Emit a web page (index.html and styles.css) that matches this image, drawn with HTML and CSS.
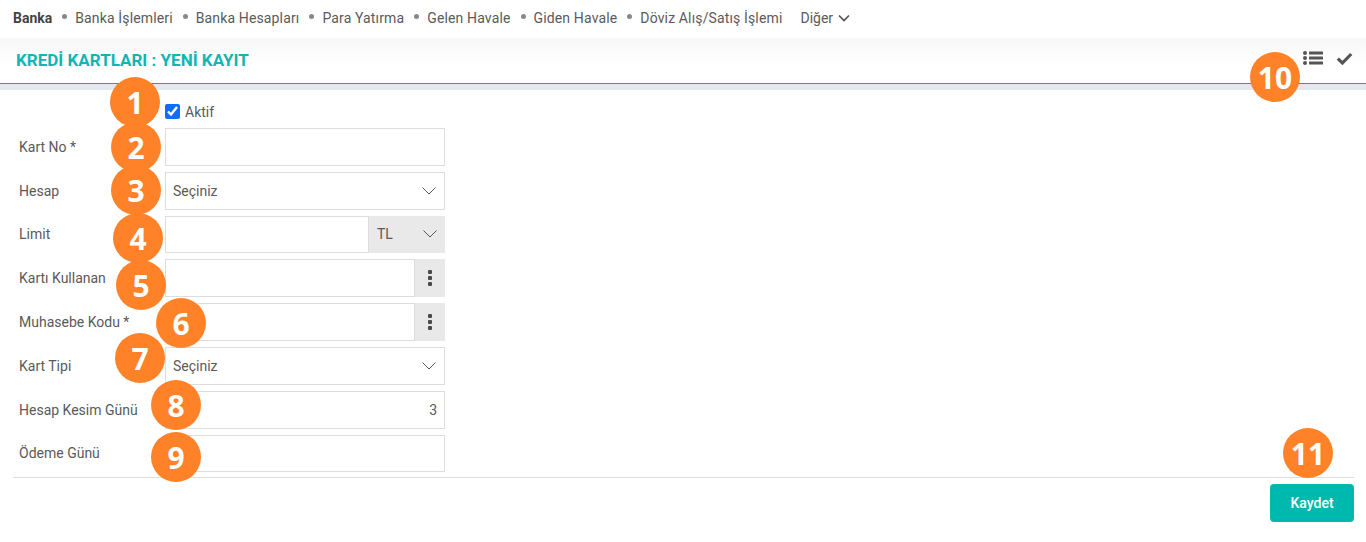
FILE: index.html
```html
<!DOCTYPE html>
<html>
<head>
    <meta charset="UTF-8">
    <meta name="viewport" content="width=device-width, initial-scale=1.0">
    <title>Kredi Kartları</title>
    <link rel="stylesheet" href="styles.css">
</head>
<body>
    <nav class="topnav">
        <a class="nav-title">Banka</a>
        <a class="nav-item">Banka İşlemleri</a>
        <a class="nav-item">Banka Hesapları</a>
        <a class="nav-item">Para Yatırma</a>
        <a class="nav-item">Gelen Havale</a>
        <a class="nav-item">Giden Havale</a>
        <a class="nav-item">Döviz Alış/Satış İşlemi</a>
        <a class="nav-more">Diğer
            <svg width="12" height="8" viewBox="0 0 12 8"><path d="M1 1.5l5 5 5-5" fill="none" stroke="#555" stroke-width="1.7"/></svg>
        </a>
    </nav>

    <header class="page-head">
        <h1>KREDİ KARTLARI : YENİ KAYIT</h1>
        <div class="head-icons">
            <svg width="20" height="14" viewBox="0 0 20 14" fill="#555">
                <circle cx="2" cy="2" r="2"/><circle cx="2" cy="7" r="2"/><circle cx="2" cy="12" r="2"/>
                <rect x="6" y="0.5" width="14" height="3" rx="0.5"/><rect x="6" y="5.5" width="14" height="3" rx="0.5"/><rect x="6" y="10.5" width="14" height="3" rx="0.5"/>
            </svg>
            <svg width="17" height="13" viewBox="0 0 17 13"><path d="M1.8 6.6l4.6 4.4L15.2 2" fill="none" stroke="#555" stroke-width="3.2"/></svg>
        </div>
    </header>

    <main class="panel">
        <form class="card-form">
            <div class="form-row check-row">
                <label class="check-label"><input type="checkbox" checked> Aktif</label>
            </div>
            <div class="form-row">
                <label for="kart-no">Kart No *</label>
                <div class="field"><input type="text" id="kart-no"></div>
            </div>
            <div class="form-row">
                <label for="hesap">Hesap</label>
                <div class="field"><select id="hesap"><option>Seçiniz</option></select></div>
            </div>
            <div class="form-row">
                <label for="limit">Limit</label>
                <div class="field">
                    <input type="text" id="limit">
                    <select class="currency"><option>TL</option></select>
                </div>
            </div>
            <div class="form-row">
                <label for="kullanan">Kartı Kullanan</label>
                <div class="field">
                    <input type="text" id="kullanan">
                    <button type="button" class="more-btn"><span></span><span></span><span></span></button>
                </div>
            </div>
            <div class="form-row">
                <label for="muhasebe">Muhasebe Kodu *</label>
                <div class="field">
                    <input type="text" id="muhasebe">
                    <button type="button" class="more-btn"><span></span><span></span><span></span></button>
                </div>
            </div>
            <div class="form-row">
                <label for="tip">Kart Tipi</label>
                <div class="field"><select id="tip"><option>Seçiniz</option></select></div>
            </div>
            <div class="form-row">
                <label for="kesim">Hesap Kesim Günü</label>
                <div class="field"><input type="text" id="kesim" class="num" value="3"></div>
            </div>
            <div class="form-row">
                <label for="odeme">Ödeme Günü</label>
                <div class="field"><input type="text" id="odeme"></div>
            </div>
        </form>
        <div class="form-foot">
            <button type="submit" class="save-btn">Kaydet</button>
        </div>
    </main>

    <!-- numbered callouts over the screen -->
    <div class="badge b1">1</div>
    <div class="badge b2">2</div>
    <div class="badge b3">3</div>
    <div class="badge b4">4</div>
    <div class="badge b5">5</div>
    <div class="badge b6">6</div>
    <div class="badge b7">7</div>
    <div class="badge b8">8</div>
    <div class="badge b9">9</div>
    <div class="badge b10">10</div>
    <div class="badge b11">11</div>
</body>
</html>
```

FILE: styles.css
```css
* {
    box-sizing: border-box;
}
html, body {
    height: 100%;
}
body {
    margin: 0;
    position: relative;
    overflow: hidden;
    font-family: Roboto, 'Liberation Sans', sans-serif;
    font-size: 14px;
    color: #5a5a5a;
    background-color: #fff;
}
.topnav {
    display: flex;
    align-items: center;
    height: 38px;
    padding: 0 0 3px 13px;
    background-color: #fff;
}
.nav-title {
    font-weight: 700;
    color: #444;
}
.nav-item {
    display: flex;
    align-items: center;
    margin-left: 10px;
    letter-spacing: 0.01em;
}
.nav-item::before {
    content: "";
    width: 5px;
    height: 5px;
    margin-right: 8px;
    margin-bottom: 3px;
    border-radius: 50%;
    background-color: #888;
}
.nav-more {
    display: flex;
    align-items: center;
    gap: 5px;
    margin-left: 18px;
}
.page-head {
    display: flex;
    justify-content: space-between;
    align-items: center;
    height: 46px;
    padding: 0 13px 2px 16px;
    border-bottom: 1px solid #2a9f96;
    background: linear-gradient(#f7f7f7, #fff 60%);
}
.page-head h1 {
    margin: 0;
    font-size: 17px;
    font-weight: 700;
    color: #12b5b5;
}
.head-icons {
    display: flex;
    align-items: center;
    gap: 13px;
    margin-bottom: 3px;
}
.head-icons svg {
    display: block;
}
.panel {
    height: 454px;
    padding: 0 12px 0 13px;
    border-top: 6px solid #e4e8ee;
    background-color: #fff;
}
.card-form {
    display: flex;
    flex-direction: column;
    gap: 6px;
    height: 388px;
    padding: 2px 0 0 6px;
    border-bottom: 1px solid #ddd;
}
.form-row {
    display: flex;
    align-items: center;
    height: 37.8px;
}
.form-row label {
    width: 146px;
    flex-shrink: 0;
}
.check-row {
    height: 30px;
    padding-left: 146px;
    padding-top: 9px;
}
.form-row .check-label {
    display: flex;
    align-items: center;
    gap: 5px;
    width: auto;
}
.check-label input {
    width: 15px;
    height: 15px;
    margin: 0;
    accent-color: #0d6efd;
}
.field {
    display: flex;
    width: 280px;
    height: 100%;
}
.field input[type="text"],
.field select {
    flex: 1;
    min-width: 0;
    height: 100%;
    padding: 0 7px;
    border: 1px solid #ddd;
    border-radius: 0;
    outline: none;
    font-family: inherit;
    font-size: 14px;
    color: #5a5a5a;
    background-color: #fff;
}
.field select {
    appearance: none;
    background-image: url("data:image/svg+xml,%3Csvg xmlns='http://www.w3.org/2000/svg' width='14' height='8'%3E%3Cpath d='M.5.5L7 7l6.5-6.5' fill='none' stroke='%23555' stroke-width='1'/%3E%3C/svg%3E");
    background-repeat: no-repeat;
    background-position: right 8px center;
}
.field .currency {
    flex: 0 0 76px;
    border: none;
    padding-left: 8px;
    background-color: #e9e9e9;
}
.field .num {
    text-align: right;
}
.more-btn {
    display: flex;
    flex-direction: column;
    justify-content: center;
    align-items: center;
    gap: 2px;
    flex: 0 0 30px;
    padding: 0;
    border: none;
    background-color: #e9e9e9;
}
.more-btn span {
    width: 4px;
    height: 4px;
    border-radius: 1px;
    background-color: #4a4a4a;
}
.form-foot {
    display: flex;
    justify-content: flex-end;
    padding-top: 6px;
}
.save-btn {
    width: 84px;
    height: 38px;
    border: none;
    border-radius: 4px;
    font-family: inherit;
    font-size: 14px;
    font-weight: 500;
    color: #fff;
    background-color: #00b9ae;
}
.badge {
    position: absolute;
    width: 50px;
    height: 50px;
    border-radius: 50%;
    display: flex;
    align-items: center;
    justify-content: center;
    font-family: 'Open Sans', sans-serif;
    font-size: 30px;
    font-weight: 700;
    color: #fff;
    background-color: #ff8128;
}
.b1 { left: 110px; top: 77px; }
.b2 { left: 111px; top: 122px; }
.b3 { left: 111px; top: 165px; }
.b4 { left: 113px; top: 213px; }
.b5 { left: 116px; top: 260px; }
.b6 { left: 156px; top: 298px; }
.b7 { left: 115px; top: 333px; }
.b8 { left: 151px; top: 380px; }
.b9 { left: 151px; top: 432px; }
.b10 { left: 1250px; top: 52px; }
.b11 { left: 1283px; top: 428px; }
```
